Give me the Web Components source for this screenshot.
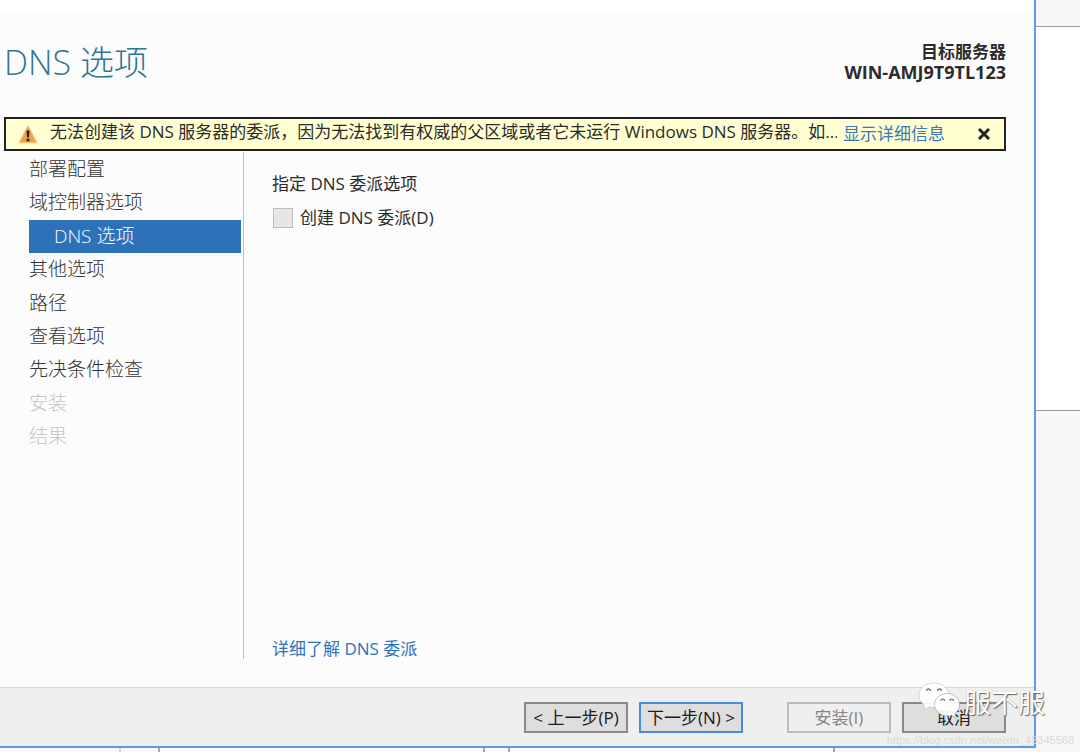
<!DOCTYPE html>
<html lang="zh-CN">
<head>
<meta charset="utf-8">
<title>DNS 选项</title>
<style>
html, body { margin: 0; height: 100%; }
body {
  font-family: "Open Sans", "Noto Sans CJK SC", sans-serif;
  font-size: 17px; line-height: 24px; color: #2b2b2b; background: #fff; overflow: hidden;
}
</style>
</head>
<body>
<wizard-desktop>
  <wizard-dialog>
    <wizard-header slot="header" heading="DNS 选项" label="目标服务器" server="WIN-AMJ9T9TL123"></wizard-header>
    <warning-bar slot="notice" link="显示详细信息">无法创建该 DNS 服务器的委派，因为无法找到有权威的父区域或者它未运行 Windows DNS 服务器。如...</warning-bar>
    <wizard-nav slot="nav">
      <wizard-step>部署配置</wizard-step>
      <wizard-step>域控制器选项</wizard-step>
      <wizard-step current>DNS 选项</wizard-step>
      <wizard-step>其他选项</wizard-step>
      <wizard-step>路径</wizard-step>
      <wizard-step>查看选项</wizard-step>
      <wizard-step>先决条件检查</wizard-step>
      <wizard-step disabled>安装</wizard-step>
      <wizard-step disabled>结果</wizard-step>
    </wizard-nav>
    <dns-options></dns-options>
    <wizard-button slot="footer">&lt; 上一步(P)</wizard-button>
    <wizard-button slot="footer" primary>下一步(N) &gt;</wizard-button>
    <wizard-button slot="footer" disabled apart>安装(I)</wizard-button>
    <wizard-button slot="footer">取消</wizard-button>
  </wizard-dialog>
  <page-watermark slot="watermark" name="服不服">https://blog.csdn.net/weixin_45345568</page-watermark>
</wizard-desktop>
<script>
const define = (name, html, setup) => customElements.define(name, class extends HTMLElement {
  constructor() {
    super();
    const t = document.createElement('template');
    t.innerHTML = html;
    this.attachShadow({ mode: 'open' }).append(t.content.cloneNode(true));
  }
  connectedCallback() { if (setup) setup(this, this.shadowRoot); }
});

define('wizard-desktop', `
<style>
:host { display: flex; flex-direction: column; height: 100vh; position: relative; overflow: hidden; }
.row { flex: 1; display: flex; min-height: 0; }
.main { flex: 1; display: flex; min-width: 0; }
.behind { width: 44px; display: flex; flex-direction: column; background: #f7f7f7; }
.pane { margin-top: 26px; height: 383px; background: #fff; border: solid #999; border-width: 1px 0; }
.strip { height: 4px; display: flex; background: #fdfdfd; }
.strip i { border-right: 2px solid #a8a8a8; box-sizing: border-box; }
.a { width: 121px; background: #f9f9f9; } .strip .a { border-color: #d4d4d4; }
.b { width: 39px; background: #f9f9f9; } .c { width: 325px; } .d { width: 25px; } .e { width: 325px; }
.f { flex: 1; background: #f7f7f7; } .strip .f { border: 0; }
</style>
<div class="row"><div class="main"><slot></slot></div><div class="behind"><div class="pane"></div></div></div>
<div class="strip"><i class="a"></i><i class="b"></i><i class="c"></i><i class="d"></i><i class="e"></i><i class="f"></i></div>
<slot name="watermark"></slot>`);

define('wizard-dialog', `
<style>
:host { flex: 1; min-width: 0; display: flex; flex-direction: column; background: #fcfcfc; border: solid #5f9ade; border-width: 0 2px 2px 0; }
.top { height: 10px; background: #fff; }
.notice { padding: 0 28px 0 4px; }
.body { flex: 1; display: flex; padding: 1px 28px 28px 29px; min-height: 0; }
footer { display: flex; justify-content: flex-end; gap: 11px; padding: 14px 28px 13px 0; background: #efefef; border-top: 1px solid #d9d9d9; }
</style>
<div class="top"></div>
<slot name="header"></slot>
<div class="notice"><slot name="notice"></slot></div>
<div class="body"><slot name="nav"></slot><slot></slot></div>
<footer><slot name="footer"></slot></footer>`);

define('wizard-header', `
<style>
:host { display: flex; justify-content: space-between; align-items: center; height: 104px; padding: 0 28px 3px 4px; }
h1 { margin: 0; font-size: 34px; line-height: 44px; font-weight: 300; color: #2f7597; }
p { margin: 0; font-weight: 700; line-height: 20px; text-align: right; }
span { display: block; }
.s { font-size: 18px; }
</style>
<h1></h1><p><span class="l"></span><span class="s"></span></p>`, (el, r) => {
  r.querySelector('h1').textContent = el.getAttribute('heading');
  r.querySelector('.l').textContent = el.getAttribute('label');
  r.querySelector('.s').textContent = el.getAttribute('server');
});

define('warning-bar', `
<style>
:host { display: flex; align-items: center; height: 30px; border: 2px solid #222; background: #ffffd1; padding: 0 13px 0 12px; }
svg { flex: none; }
.icon { width: 20px; height: 20px; margin-right: 12px; }
.msg { flex: 1; min-width: 0; white-space: nowrap; overflow: hidden; padding-bottom: 4px; }
a { color: #3b78b8; text-decoration: none; margin: 0 32px 0 6px; white-space: nowrap; }
button { border: 0; padding: 0; background: none; width: 14px; height: 14px; display: flex; }
</style>
<svg class="icon" viewBox="0 0 20 20"><path d="M10 1 L19.500 19 H.5Z" fill="#f3a33c" stroke="#f8e3c0" stroke-linejoin="round"/><path d="M8.500 6.500h3l-.6 7H9.100z" fill="#222"/><rect x="8.600" y="14.800" width="2.800" height="2.500" fill="#222"/></svg>
<span class="msg"><slot></slot></span>
<a href="#"></a>
<button aria-label="关闭"><svg width="14" height="14" viewBox="0 0 14 14"><path d="M2 2 12 12M12 2 2 12" stroke="#222" stroke-width="3"/></svg></button>`, (el, r) => {
  r.querySelector('a').textContent = el.getAttribute('link');
});

define('wizard-nav', `
<style>
:host { display: block; width: 212px; flex: none; padding-right: 2px; border-right: 1px solid #c2c2c2; }
nav { display: flex; flex-direction: column; justify-content: space-between; height: 300px; padding-top: 1px; }
</style><nav><slot></slot></nav>`);

define('wizard-step', `
<style>
:host { display: block; }
a { display: block; font-size: 19px; font-weight: 300; height: 33px; line-height: 33px; color: #333; text-decoration: none; }
:host([current]) a { background: #2d72b8; color: #fff; padding-left: 25px; }
:host([disabled]) a { color: #c4c4c4; }
</style><a href="#"><slot></slot></a>`);

define('dns-options', `
<style>
:host { flex: 1; display: flex; flex-direction: column; padding: 20px 0 0 28px; }
label { display: flex; align-items: center; gap: 7px; margin-top: 10px; }
input { appearance: none; margin: 0 0 0 1px; width: 20px; height: 20px; border: 1px solid #bcbcbc; background: #e6e6e6; }
a { margin-top: auto; margin-bottom: -2px; color: #3072ba; text-decoration: none; }
</style>
<div>指定 DNS 委派选项</div>
<label><input type="checkbox" disabled>创建 DNS 委派(D)</label>
<a href="#">详细了解 DNS 委派</a>`);

define('wizard-button', `
<style>
:host { display: block; }
:host([apart]) { margin-left: 33px; }
button { display: block; width: 104px; height: 31px; padding: 0; font: inherit; line-height: 24px; color: #1c1c1c; background: #dedede; border: 2px solid #8a8a8a; white-space: nowrap; }
:host([primary]) button { border-color: #4b8bdb; }
:host([disabled]) button { color: #858585; background: #efefef; border-color: #b9bcbf; }
</style><button><slot></slot></button>`, (el, r) => {
  r.querySelector('button').disabled = el.hasAttribute('disabled');
});

define('page-watermark', `
<style>
:host { position: absolute; right: 6px; bottom: 4px; display: flex; flex-direction: column; align-items: flex-end; pointer-events: none; }
.brand { display: flex; align-items: center; margin: 0 29px 7px 0; font-size: 27px; line-height: 36px; color: #fff; text-shadow: 1px 1px 1px #666, 0 0 1px #aaa; }
.url { font: 11px/16px "Liberation Sans", sans-serif; color: #d9d9d9; }
svg { margin: 0 2px 6px 0; }
</style>
<div class="brand"><svg width="44" height="38" viewBox="0 0 44 38"><g fill="#fff" fill-opacity=".93" stroke="#bbb" stroke-width=".6"><path d="M16 2C7 2 1 7.500 1 14.500c0 4 2.200 7.500 5.500 9.800L5 29l6-3c1.600.4 3.300.6 5 .6 8.500 0 15-5.500 15-12.300S24.500 2 16 2z"/><path d="M29 12.500c-7 0-12.500 5-12.500 11S22 35 29 35c1.600 0 3-.2 4.400-.7l4.600 2.500-1.200-4.200c3-2.200 4.700-5.500 4.700-9.100 0-6-5.500-11-12.500-11z" stroke="#999"/></g><g fill="none" stroke="#777" stroke-width="1.300"><path d="M8.500 10a2 2 0 014 0M19.500 10a2 2 0 014 0M23 20a1.800 1.800 0 013.600 0M32 20a1.800 1.800 0 013.600 0"/></g></svg><span class="name"></span></div>
<div class="url"><slot></slot></div>`, (el, r) => {
  r.querySelector('.name').textContent = el.getAttribute('name');
});
</script>
</body>
</html>
